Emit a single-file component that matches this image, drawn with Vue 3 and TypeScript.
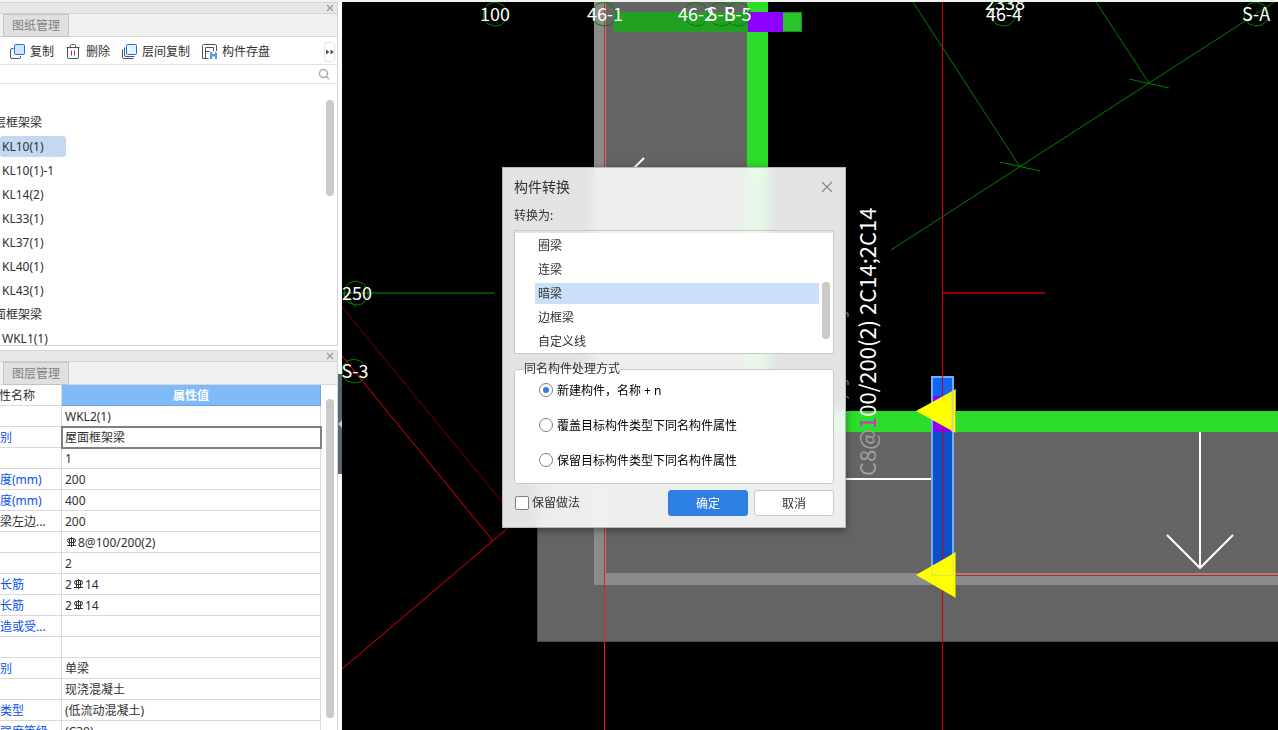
<script setup lang="ts">
import { ref } from 'vue'

interface TreeRow { label: string; group?: boolean }
interface PropRow { name: string; value: string; editable?: boolean; rebar?: [string, string] }
interface AxisMark { x: number; y: number; label: string; tx: number; ty: number }

const treeRows: TreeRow[] = [
  { label: '楼层框架梁', group: true },
  { label: 'KL10(1)' },
  { label: 'KL10(1)-1' },
  { label: 'KL14(2)' },
  { label: 'KL33(1)' },
  { label: 'KL37(1)' },
  { label: 'KL40(1)' },
  { label: 'KL43(1)' },
  { label: '屋面框架梁', group: true },
  { label: 'WKL1(1)' },
]
const currentBeam = ref('KL10(1)')

const props: PropRow[] = [
  { name: '名称', value: 'WKL2(1)' },
  { name: '结构类别', value: '屋面框架梁', editable: true },
  { name: '跨数量', value: '1' },
  { name: '截面宽度(mm)', value: '200', editable: true },
  { name: '截面高度(mm)', value: '400', editable: true },
  { name: '轴线距梁左边...', value: '200' },
  { name: '箍筋', value: '', rebar: ['', '8@100/200(2)'] },
  { name: '肢数', value: '2' },
  { name: '上部通长筋', value: '', rebar: ['2', '14'], editable: true },
  { name: '下部通长筋', value: '', rebar: ['2', '14'], editable: true },
  { name: '侧面构造或受...', value: '', editable: true },
  { name: '拉筋', value: '' },
  { name: '定额类别', value: '单梁', editable: true },
  { name: '材质', value: '现浇混凝土' },
  { name: '混凝土类型', value: '(低流动混凝土)', editable: true },
  { name: '混凝土强度等级', value: '(C30)', editable: true },
]
const currentProp = ref(1)

const marks: AxisMark[] = [
  { x: 495, y: 14, label: '100', tx: 495, ty: 21 },
  { x: 604, y: 14, label: '46-1', tx: 605, ty: 21 },
  { x: 696, y: 14, label: '46-2', tx: 696, ty: 21 },
  { x: 721, y: 14, label: 'S-B', tx: 721, ty: 21 },
  { x: 738, y: 14, label: 'S-5', tx: 738, ty: 21 },
  { x: 1003, y: 14, label: '46-4', tx: 1004, ty: 21 },
  { x: 1256, y: 14, label: 'S-A', tx: 1256, ty: 21 },
  { x: 356, y: 293, label: '250', tx: 357, ty: 300 },
  { x: 354, y: 371, label: 'S-3', tx: 355, ty: 378 },
]
const ring = '0,-12 8,-9 12,-3 12,5 6,11 0,12 -7,10 -12,4 -11,-5 -7,-10'

const targets = ['圈梁', '连梁', '暗梁', '边框梁', '自定义线']
const target = ref('暗梁')
const modes = ['新建构件，名称 + n', '覆盖目标构件类型下同名构件属性', '保留目标构件类型下同名构件属性']
const mode = ref(0)
const keepMethod = ref(false)
const open = ref(true)
</script>

<template>
  <div class="app">
    <aside class="side">
      <section class="panel panel-list">
        <div class="titlebar">
          <button class="mini-close" aria-label="关闭">
            <svg width="8" height="8" viewBox="0 0 8 8"><path d="M1 1l6 6M7 1l-6 6" /></svg>
          </button>
        </div>
        <div class="tabs"><button class="tab">图纸管理</button></div>
        <div class="toolbar">
          <button class="tool">
            <svg width="16" height="16" viewBox="0 0 16 16">
              <path class="ink" d="M3.5 4.5H2q-1.500 0-1.500 1.500v7q0 1.500 1.500 1.500H9q1.500 0 1.500-1.500V12" />
              <rect class="blue" x="4.500" y=".5" width="10" height="10" rx="1" />
            </svg>复制
          </button>
          <button class="tool">
            <svg width="16" height="16" viewBox="0 0 16 16">
              <path class="ink" d="M.5 3.500h13M4.500 3.500V1.500q0-1 1-1h3q1 0 1 1v2M1.500 3.500V13q0 1.500 1.500 1.500h8q1.500 0 1.500-1.500V3.500" />
              <path class="danger" d="M5.500 6.500v5M8.500 6.500v5" />
            </svg>删除
          </button>
          <button class="tool">
            <svg width="16" height="16" viewBox="0 0 16 16">
              <path class="ink" d="M.5 5.500V13q0 1.500 1.500 1.500h9.500M2.500 3.500v7.500q0 1.500 1.500 1.500h8.500" />
              <rect class="blue light" x="4.500" y=".5" width="10" height="10" rx="1" />
            </svg>层间复制
          </button>
          <button class="tool">
            <svg width="16" height="16" viewBox="0 0 16 16">
              <path class="ink" d="M6.500 14.500h-6v-13q0-1 1-1h12q1 0 1 1v5.500M3.500 14.500v-11h8v3.500M3.500 7.500h4" />
              <path class="save" d="M8 8h6l1 1v6H8z" />
              <path class="save-hole" d="M10 8v2h3V8M10 15v-2.500h3V15" />
            </svg>构件存盘
          </button>
          <button class="more" aria-label="更多">
            <svg width="8" height="6" viewBox="0 0 8 6"><path d="M0 .5L3.500 3 0 5.500zM4.500 .5L8 3 4.500 5.500z" /></svg>
          </button>
        </div>
        <div class="search">
          <input type="text" aria-label="搜索构件" />
          <svg width="12" height="12" viewBox="0 0 12 12"><circle cx="5.500" cy="5.500" r="4" /><path d="M8 8.500l3 2.500" /></svg>
        </div>
        <div class="tree-wrap">
          <ul class="tree">
            <li v-for="row in treeRows" :key="row.label" :class="{ group: row.group }">
              <button :class="{ active: row.label === currentBeam }" @click="currentBeam = row.label">{{ row.label }}</button>
            </li>
          </ul>
          <span class="thumb tree-thumb"></span>
        </div>
      </section>

      <section class="panel panel-props">
        <div class="titlebar">
          <button class="mini-close" aria-label="关闭">
            <svg width="8" height="8" viewBox="0 0 8 8"><path d="M1 1l6 6M7 1l-6 6" /></svg>
          </button>
        </div>
        <div class="tabs"><button class="tab">图层管理</button></div>
        <div class="grid-wrap">
          <table class="grid">
            <thead>
              <tr><th class="name">属性名称</th><th class="value">属性值</th></tr>
            </thead>
            <tbody>
              <tr v-for="(p, i) in props" :key="p.name">
                <td class="name" :class="{ editable: p.editable }">{{ p.name }}</td>
                <td class="value" :class="{ current: i === currentProp }" @click="currentProp = i">
                  <template v-if="p.rebar">{{ p.rebar[0] }}<svg class="rebar" width="11" height="10" viewBox="0 0 11 10"><path d="M5.500 0v10M1 8.500h9M3.500 1.500h4q2 0 2 2t-2 2h-4q-2 0-2-2t2-2zM3.500 2v6.500M7.500 2v6.500" /></svg>{{ p.rebar[1] }}</template>
                  <template v-else>{{ p.value }}</template>
                </td>
              </tr>
            </tbody>
          </table>
          <span class="thumb grid-thumb"></span>
        </div>
      </section>
      <button class="collapse" aria-label="收起">
        <svg width="4" height="8" viewBox="0 0 4 8"><path d="M4 0v8L0 4z" /></svg>
      </button>
    </aside>

    <main class="stage">
      <svg class="drawing">
        <g transform="translate(-342 -2)">
          <g shape-rendering="crispEdges">
            <rect x="605" y="2" width="143" height="430" fill="#646464" />
            <rect x="537" y="432" width="2000" height="210" fill="#646464" />
            <path d="M537.500 432v209.500h2000" fill="none" stroke="#4c4c4c" />
            <rect x="594" y="2" width="12" height="583" fill="#8b8b8b" />
            <rect x="594" y="573" width="2000" height="12" fill="#8b8b8b" />
            <rect x="747" y="2" width="21" height="430" fill="#2cdd2c" />
            <rect x="747" y="411" width="2000" height="21" fill="#2cdd2c" />
            <rect x="614" y="12" width="134" height="20" fill="#21a021" />
            <rect x="783" y="12" width="19" height="20" fill="#2ac52a" />
            <path d="M783 12.500h18.500v19H783" fill="none" stroke="#1c8a1c" />
            <rect x="748" y="12" width="35" height="20" fill="#8b00ff" />
            <rect x="604" y="2" width="1" height="2000" fill="#e02020" />
            <rect x="942" y="292" width="103" height="2" fill="#8c0000" />
            <rect x="342" y="292" width="153" height="2" fill="#004800" />
            <rect x="846" y="478" width="86" height="2" fill="#fff" />
          </g>
          <g fill="none" stroke="#008000">
            <path d="M891 250L1276 1M913 2l107 165M1096 2l53 81M1000 162l40 9M1129 79l40 9" />
            <path d="M344 295l12 12" />
            <polygon v-for="m in marks" :key="m.label" :points="ring" :transform="`translate(${m.x} ${m.y})`" />
          </g>
          <path d="M342 307l160 195" fill="none" stroke="#7c0000" />
          <path d="M342 356l151 185M342 669l167-142" fill="none" stroke="#f00000" />
          <path d="M634 168l10-10M1200 432v136M1167 535l33 33 33-33" fill="none" stroke="#fff" stroke-width="2" />
          <path d="M845 313h3v4M845 381h3v4M845 396l4 2" fill="none" stroke="#aaa" />
          <text v-for="m in marks" :key="m.label" :x="m.tx" :y="m.ty" class="mark">{{ m.label }}</text>
          <text x="1005" y="10" class="mark">2338</text>
          <text class="note" transform="translate(876 476) rotate(-90)"><tspan fill="#a0a0a0">C8@</tspan><tspan fill="#d32cd3">1</tspan>00/200(2) 2C14;2C14</text>
          <g shape-rendering="crispEdges">
            <rect x="932" y="377" width="21" height="199" fill="#0b50c8" />
            <rect x="932" y="377" width="21" height="34" fill="#0d66f5" />
            <rect x="932" y="396" width="21" height="36" fill="#8b00ff" />
            <rect x="932" y="377" width="21" height="199" fill="none" stroke="#76acf5" stroke-width="2" />
            <rect x="942" y="2" width="1" height="2000" fill="#d00000" />
            <rect x="943" y="575" width="2000" height="1" fill="#e01818" />
          </g>
          <path d="M916 411l40-22v44zM916 575l40-23v46z" fill="#ff0" />
          <path d="M952.500 391v41" stroke="#c8d878" stroke-width="2" />
          <path d="M932 565v10.500h21V556" fill="none" stroke="#d8e070" />
          <path d="M955.500 390v43M955.500 553v45" stroke="#b8b800" />
        </g>
      </svg>

      <section v-if="open" class="dialog" role="dialog" aria-labelledby="dlg-title">
        <header class="dlg-head">
          <h1 id="dlg-title">构件转换</h1>
          <button class="dlg-close" aria-label="关闭" @click="open = false">
            <svg width="12" height="12" viewBox="0 0 12 12"><path d="M1 1l10 10M11 1L1 11" /></svg>
          </button>
        </header>
        <div id="to-label" class="to-label">转换为:</div>
        <div class="list">
          <ul role="listbox" aria-labelledby="to-label">
            <li v-for="t in targets" :key="t" role="option" :aria-selected="t === target" @click="target = t">
              <span :class="{ active: t === target }">{{ t }}</span>
            </li>
          </ul>
          <span class="thumb list-thumb"></span>
        </div>
        <fieldset>
          <legend>同名构件处理方式</legend>
          <div class="modes">
            <label v-for="(m, i) in modes" :key="m">
              <input v-model="mode" type="radio" name="mode" :value="i" /><span>{{ m }}</span>
            </label>
          </div>
        </fieldset>
        <footer class="dlg-foot">
          <label><input v-model="keepMethod" type="checkbox" />保留做法</label>
          <button class="btn primary" @click="open = false">确定</button>
          <button class="btn" @click="open = false">取消</button>
        </footer>
      </section>
    </main>
  </div>
</template>

<style>
body { overflow: hidden; }
</style>

<style scoped>
.app {
  box-sizing: border-box;
  display: flex;
  height: 100vh;
  padding-top: 2px;
  background: #f0f0f0;
  color: #303030;
  font: 12px/20px "Noto Sans", "Noto Sans CJK SC", sans-serif;
}
.app *, .app *::before { box-sizing: border-box; }
button {
  padding: 0;
  border: 0;
  background: none;
  color: inherit;
  font: inherit;
  cursor: pointer;
}
ul { margin: 0; padding: 0; list-style: none; }
svg { display: block; flex: none; }

.side {
  position: relative;
  display: flex;
  flex-direction: column;
  gap: 4px;
  flex: none;
  width: 342px;
  padding-right: 4px;
  background: #fff;
}
.panel {
  display: flex;
  flex-direction: column;
  overflow: hidden;
  border-top: 1px solid #d4d4d4;
  border-right: 1px solid #d4d4d4;
  background: #fff;
}
.panel-list { height: 344px; flex: none; border-bottom: 1px solid #d4d4d4; }
.panel-props { flex: 1; min-height: 0; }
.titlebar {
  display: flex;
  flex: none;
  justify-content: flex-end;
  align-items: center;
  height: 11px;
  padding-right: 3px;
  border-bottom: 1px solid #d4d4d4;
  background: #e7e7e7;
}
.mini-close path { fill: none; stroke: #999; stroke-width: 1.2; }
.tabs {
  flex: none;
  height: 23px;
  padding-left: 3px;
  border-bottom: 1px solid #d8d8d8;
  background: #f1f1f1;
}
.tab {
  display: block;
  width: 66px;
  height: 23px;
  border: 1px solid #c2c2c8;
  background: #e0e0e0;
  color: #808080;
}
.toolbar {
  display: flex;
  flex: none;
  align-items: center;
  gap: 12px;
  height: 28px;
  padding: 2px 2px 0 10px;
  border-bottom: 1px solid #e2e2e2;
}
.tool { display: flex; align-items: center; gap: 4px; white-space: nowrap; }
.ink { fill: none; stroke: #4b5366; }
.blue { fill: #d3e4fc; stroke: #1670e4; }
.blue.light { fill: #e6f1fe; }
.danger { fill: none; stroke: #e01f2d; }
.save { fill: #5a9bea; }
.save-hole { fill: #fff; }
.more {
  display: grid;
  place-items: center;
  width: 11px;
  height: 20px;
  margin-left: auto;
  border: 1px solid #e4e4e4;
  border-radius: 3px;
}
.more path { fill: #4b5366; }
.search {
  display: flex;
  flex: none;
  align-items: center;
  height: 19px;
  padding-right: 7px;
  border-bottom: 1px solid #e2e2e2;
}
.search input { flex: 1; min-width: 0; height: 16px; border: 0; outline: 0; background: none; }
.search svg { fill: none; stroke: #a8a8a8; stroke-width: 1.5; }
.tree-wrap { position: relative; flex: 1; min-height: 0; overflow: hidden; }
.tree { padding-top: 26px; }
.tree li { display: flex; align-items: center; height: 24px; }
.tree li.group { margin-left: -20px; }
.tree button {
  height: 21px;
  padding: 0 2px;
  border-radius: 3px;
  line-height: 21px;
  text-align: left;
  white-space: nowrap;
}
.tree button.active { width: 66px; background: #c2d9f1; }
.thumb { position: absolute; width: 8px; border-radius: 4px; background: #cacaca; }
.tree-thumb { top: 16px; right: 3px; height: 96px; }

.grid-wrap { position: relative; flex: 1; min-height: 0; overflow: hidden; }
.grid {
  width: 360px;
  margin-left: -39px;
  border-spacing: 0;
  table-layout: fixed;
}
.grid th, .grid td {
  height: 21px;
  padding: 2px 3px 0;
  border-right: 1px solid #dadada;
  border-bottom: 1px solid #dadada;
  line-height: 18px;
  font-weight: 400;
  text-align: left;
  white-space: nowrap;
  overflow: hidden;
}
.grid .name { width: 101px; }
.grid th.name { text-align: center; }
.grid th.value { background: #80baf9; border-color: #6aa5ea; color: #fff; font-weight: 700; text-align: center; }
.grid td.editable { color: #0a50f5; }
.grid td.current { outline: 2px solid #808080; outline-offset: -1px; }
.rebar { display: inline-block; margin: 0 1px; vertical-align: 0; fill: none; stroke: #303030; }
.grid-thumb { top: 14px; right: 3px; height: 319px; }
.collapse {
  position: absolute;
  top: 372px;
  right: 0;
  display: flex;
  align-items: center;
  width: 4px;
  height: 100px;
  background: #5c6673;
}
.collapse path { fill: #c4c8ce; }

.stage { position: relative; flex: 1; min-width: 0; overflow: hidden; background: #000; }
.drawing { width: 100%; height: 100%; }
.mark, .note { fill: #fff; font-family: "Noto Sans CJK SC", sans-serif; }
.mark { font-size: 18px; text-anchor: middle; }
.note { font-size: 22px; }

.dialog {
  position: absolute;
  top: 165px;
  left: 160px;
  width: 344px;
  padding: 0 11px 11px;
  border: 1px solid #b8b8b8;
  background: rgba(255, 255, 255, 0.89);
  backdrop-filter: blur(8px);
  box-shadow: 0 2px 8px rgba(0, 0, 0, 0.4);
}
.dlg-head { display: flex; align-items: center; justify-content: space-between; height: 38px; padding-right: 1px; }
.dlg-head h1 { margin: 0; font-size: 14px; font-weight: 400; }
.dlg-close path { fill: none; stroke: #888; stroke-width: 1.2; }
.to-label { height: 20px; margin-bottom: 4px; }
.list { position: relative; padding-top: 2px; border: 1px solid #c8c8c8; }
.list ul { padding: 0 14px 0 20px; background: #fff; }
.list li { display: flex; align-items: center; height: 24px; }
.list li span { flex: 1; height: 21px; padding-left: 3px; line-height: 21px; }
.list li span.active { background: #c9dffa; }
.list .list-thumb { top: 51px; right: 3px; height: 57px; }
fieldset {
  min-width: 0;
  margin: 6px 0 0;
  padding: 0 24px 11px;
  border: 1px solid #c8c8c8;
  border-radius: 3px;
  background: #fff;
}
legend { height: 18px; margin-left: -15px; padding: 0; line-height: 18px; }
.modes { display: flex; flex-direction: column; gap: 11px; }
.modes label { display: flex; align-items: center; gap: 4px; height: 24px; color: #000; }
.modes span { padding-top: 2px; }
input[type="radio"], input[type="checkbox"] {
  display: grid;
  place-items: center;
  flex: none;
  width: 14px;
  height: 14px;
  margin: 0;
  border: 1px solid #808080;
  border-radius: 50%;
  background: #fff;
  appearance: none;
}
input[type="checkbox"] { border-radius: 2px; }
input[type="radio"]:checked::before {
  width: 6px;
  height: 6px;
  border-radius: 50%;
  background: #2d7fe3;
  content: "";
}
input[type="checkbox"]:checked::before { width: 8px; height: 8px; background: #2d7fe3; content: ""; }
.dlg-foot { display: flex; align-items: center; gap: 6px; margin-top: 6px; }
.dlg-foot label { display: flex; align-items: center; gap: 3px; margin-right: auto; padding-left: 1px; }
.btn { width: 80px; height: 26px; padding-top: 2px; border: 1px solid #c8c8c8; border-radius: 3px; background: #fff; }
.btn.primary { border-color: #2d7fe3; background: #2d7fe3; color: #fff; }
</style>
